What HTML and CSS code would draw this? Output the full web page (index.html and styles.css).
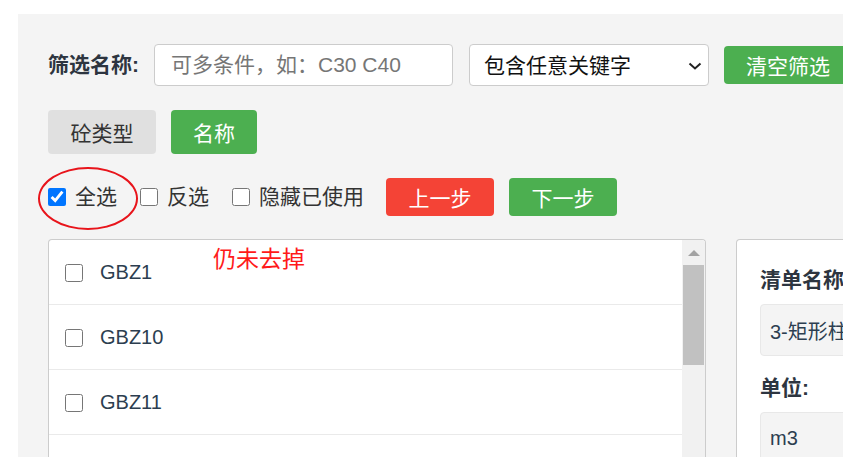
FILE: index.html
```html
<!DOCTYPE html>
<html lang="zh-CN">
<head>
<meta charset="utf-8">
<title>筛选</title>
<link rel="stylesheet" href="styles.css">
</head>
<body>
<div class="page">
  <div class="panel">
    <div class="row filter-row">
      <label class="filter-label">筛选名称:</label>
      <input class="text-input" type="text" placeholder="可多条件，如：C30 C40">
      <div class="select-wrap">
        <select class="select">
          <option>包含任意关键字</option>
        </select>
        <svg class="select-arrow" width="14" height="8" viewBox="0 0 14 8"><path d="M1.5 1.5 L7 6.5 L12.5 1.5" fill="none" stroke="#222" stroke-width="2"/></svg>
      </div>
      <button class="btn btn-green btn-clear">清空筛选</button>
    </div>

    <div class="row tab-row">
      <button class="btn tab tab-grey">砼类型</button>
      <button class="btn tab btn-green">名称</button>
    </div>

    <div class="row check-row">
      <label class="check"><input type="checkbox" checked><span>全选</span></label>
      <label class="check"><input type="checkbox"><span>反选</span></label>
      <label class="check check-last"><input type="checkbox"><span>隐藏已使用</span></label>
      <button class="btn btn-red btn-step">上一步</button>
      <button class="btn btn-green btn-step">下一步</button>
    </div>

    <div class="content">
      <div class="list">
        <div class="items">
          <label class="item"><input type="checkbox"><span>GBZ1</span></label>
          <label class="item"><input type="checkbox"><span>GBZ10</span></label>
          <label class="item"><input type="checkbox"><span>GBZ11</span></label>
          <label class="item"><input type="checkbox"><span>GBZ12</span></label>
        </div>
        <div class="scrollbar">
          <div class="scroll-arrow"></div>
          <div class="scroll-thumb"></div>
        </div>
      </div>
      <div class="detail">
        <div class="field-title">清单名称:</div>
        <div class="field-box">3-矩形柱</div>
        <div class="field-title second">单位:</div>
        <div class="field-box">m3</div>
      </div>
    </div>

    <div class="mark-ellipse"></div>
    <div class="mark-note">仍未去掉</div>
  </div>
</div>
</body>
</html>
```
FILE: styles.css
```css
html, body {
  margin: 0;
  padding: 0;
  background: #ffffff;
  overflow: hidden;
  width: 843px;
  height: 457px;
}

body {
  font-family: "Liberation Sans", "Noto Sans CJK SC", sans-serif;
  font-size: 21px;
  color: #333333;
}

.page {
  padding: 14px 0 0 18px;
}

.panel {
  position: relative;
  background: #f4f4f4;
  width: 1000px;
  height: 600px;
  padding: 30px 0 0 30px;
  box-sizing: border-box;
}

.row {
  display: flex;
  align-items: center;
}

.filter-row {
  height: 42px;
  margin-bottom: 24px;
}

.filter-label {
  font-weight: bold;
  color: #2d3540;
  font-size: 21px;
  margin-right: 15px;
  line-height: 42px;
  white-space: nowrap;
}

.text-input {
  flex-shrink: 0;
  box-sizing: border-box;
  width: 299px;
  height: 42px;
  border: 1px solid #cccccc;
  border-radius: 4px;
  padding: 0 16px;
  font-family: inherit;
  font-size: 21px;
  color: #333;
  background: #fff;
  margin-right: 16px;
  outline: none;
}

.text-input::placeholder {
  color: #767676;
}

.select-wrap {
  position: relative;
  margin-right: 15px;
  flex-shrink: 0;
}

.select {
  appearance: none;
  -webkit-appearance: none;
  box-sizing: border-box;
  width: 240px;
  height: 42px;
  border: 1px solid #cccccc;
  border-radius: 4px;
  background: #fff;
  padding: 0 14px;
  font-family: inherit;
  font-size: 21px;
  color: #111;
  outline: none;
}

.select-arrow {
  position: absolute;
  right: 7px;
  top: 18px;
}

.btn {
  border: none;
  border-radius: 4px;
  font-family: inherit;
  font-size: 21px;
  color: #ffffff;
  cursor: pointer;
  padding: 0 23px;
  flex-shrink: 0;
}

.btn-green {
  background: #4caf50;
}

.btn-red {
  background: #f44336;
}

.btn-clear {
  height: 38px;
  padding: 0 22px;
  white-space: nowrap;
}

.tab-row {
  height: 44px;
  margin-bottom: 24px;
  gap: 15px;
}

.tab {
  height: 44px;
}

.tab-grey {
  background: #e0e0e0;
  color: #333333;
  width: 108px;
  padding: 0;
}

.tab-row .btn-green {
  width: 86px;
  padding: 0;
}

.check-row {
  height: 38px;
  margin-bottom: 23px;
}

.check {
  display: flex;
  align-items: center;
  margin-right: 23px;
}

.check-last {
  margin-right: 22px;
}

.check input,
.item input {
  width: 18px;
  height: 18px;
  margin: 0;
  flex-shrink: 0;
}

.check span {
  margin-left: 9px;
  line-height: 24px;
  white-space: nowrap;
}

.btn-step {
  height: 38px;
  width: 108px;
  padding: 0;
  margin-right: 15px;
}

.content {
  display: flex;
  align-items: flex-start;
  gap: 30px;
}

.list {
  display: flex;
  flex-shrink: 0;
  width: 658px;
  height: 260px;
  box-sizing: border-box;
  background: #ffffff;
  border: 1px solid #cccccc;
  border-bottom: none;
  border-radius: 4px 4px 0 0;
  overflow: hidden;
}

.items {
  flex: 1;
}

.item {
  display: flex;
  align-items: center;
  height: 65px;
  box-sizing: border-box;
  border-bottom: 1px solid #eaeaea;
  padding-left: 16px;
  padding-top: 1px;
}

.item span {
  margin-left: 17px;
  color: #2c3e50;
  font-size: 20px;
}

.scrollbar {
  width: 23px;
  background: #f1f1f1;
  display: flex;
  flex-direction: column;
  align-items: center;
}

.scroll-arrow {
  width: 0;
  height: 0;
  border-left: 6px solid transparent;
  border-right: 6px solid transparent;
  border-bottom: 6px solid #a3a3a3;
  margin-top: 10px;
  margin-bottom: 9px;
}

.scroll-thumb {
  width: 21px;
  height: 100px;
  background: #c1c1c1;
}

.detail {
  flex-shrink: 0;
  width: 300px;
  height: 260px;
  box-sizing: border-box;
  background: #ffffff;
  border: 1px solid #cccccc;
  border-bottom: none;
  border-radius: 4px 4px 0 0;
  padding: 25px 0 0 23px;
}

.field-title {
  font-weight: bold;
  font-size: 21px;
  color: #2d3540;
  line-height: 30px;
  margin-bottom: 9px;
  white-space: nowrap;
}

.field-title.second {
  margin-top: 17px;
}

.field-box {
  box-sizing: border-box;
  height: 52px;
  background: #f4f4f4;
  border: 1px solid #e8e8e8;
  border-radius: 4px;
  padding: 0 9px;
  display: flex;
  align-items: center;
  font-size: 20px;
  color: #2c3e50;
  white-space: nowrap;
}

.mark-ellipse {
  position: absolute;
  left: 20px;
  top: 153px;
  width: 100px;
  height: 63px;
  box-sizing: border-box;
  border: 2.5px solid #e8141b;
  border-radius: 50%;
}

.mark-note {
  position: absolute;
  left: 195px;
  top: 226px;
  font-family: "Noto Sans CJK SC", sans-serif;
  font-size: 23px;
  line-height: 34px;
  color: #ff1a1a;
}
```
